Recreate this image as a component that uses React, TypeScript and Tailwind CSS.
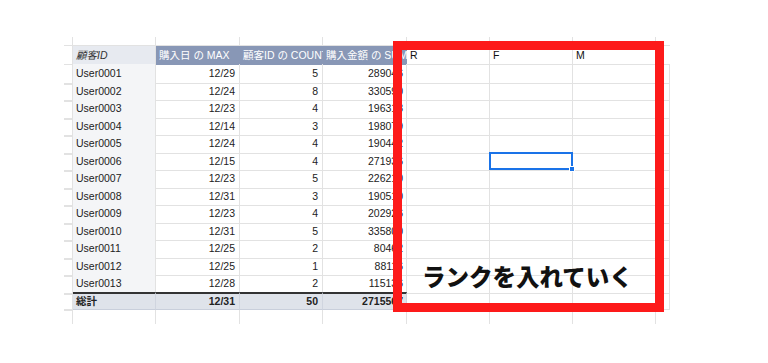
import React from "react"

type DataRow = {
    id: string
    date: string
    count: string
    amount: string
}

const rows: DataRow[] = [
    { id: "User0001", date: "12/29", count: "5", amount: "289046" },
    { id: "User0002", date: "12/24", count: "8", amount: "330590" },
    { id: "User0003", date: "12/23", count: "4", amount: "196318" },
    { id: "User0004", date: "12/14", count: "3", amount: "198079" },
    { id: "User0005", date: "12/24", count: "4", amount: "190442" },
    { id: "User0006", date: "12/15", count: "4", amount: "271936" },
    { id: "User0007", date: "12/23", count: "5", amount: "226210" },
    { id: "User0008", date: "12/31", count: "3", amount: "190510" },
    { id: "User0009", date: "12/23", count: "4", amount: "202926" },
    { id: "User0010", date: "12/31", count: "5", amount: "335800" },
    { id: "User0011", date: "12/25", count: "2", amount: "80462" },
    { id: "User0012", date: "12/25", count: "1", amount: "88116" },
    { id: "User0013", date: "12/28", count: "2", amount: "115136" },
]

const rowGrid = "grid grid-cols-[9px_83px_84px_83px_84px_83px_83px_83px_14px]"
const line = "border-r border-b border-[#e2e2e2]"
const total = "bg-[#dfe3ea] border-t-2 border-t-[#333] border-b border-b-[#c9cfdb] border-r border-r-[#d0d5df]"

const Blank = ({ last }: { last?: boolean }) => (
    <div className={last ? "border-b border-[#e2e2e2]" : line} />
)

const EmptyCells = () => (
    <>
        <Blank />
        <Blank />
        <Blank />
        <Blank />
        <Blank last />
    </>
)

const App = () => {
    return (
        <div
            className="relative w-[768px] h-[363px] bg-white overflow-hidden text-[#222]"
            style={{ fontFamily: '"Liberation Sans", "Noto Sans CJK JP", sans-serif' }}
        >
            <div className="flex flex-col pl-[64px] pt-[37px]">
                {/* partial row above */}
                <div className={`${rowGrid} h-[9px]`}>
                    <Blank />
                    <Blank />
                    <Blank />
                    <Blank />
                    <EmptyCells />
                </div>

                {/* header */}
                <div className={`${rowGrid} h-[18px] text-[10.5px] leading-[18px]`}>
                    <Blank />
                    <div className="bg-[#e7eaf0] border-r border-b border-r-[#e2e2e2] border-b-[#aab4c8] px-[3px] italic text-[#333] truncate">顧客ID</div>
                    <div className="bg-[#8897b6] border-b border-[#8897b6] px-[3px] text-white whitespace-nowrap overflow-hidden">購入日 の MAX</div>
                    <div className="bg-[#8897b6] border-b border-[#8897b6] px-[3px] text-white whitespace-nowrap overflow-hidden">顧客ID の COUNT</div>
                    <div className="bg-[#8897b6] border-b border-[#8897b6] px-[3px] text-white whitespace-nowrap overflow-hidden">購入金額 の SUM</div>
                    <div className={`${line} px-[3px] text-[#111]`}>R</div>
                    <div className={`${line} px-[3px] text-[#111]`}>F</div>
                    <div className={`${line} px-[3px] text-[#111]`}>M</div>
                    <Blank last />
                </div>

                {rows.map((r) => (
                    <div key={r.id} className={`${rowGrid} h-[17.5px] text-[10.5px] leading-[18.5px]`}>
                        <Blank />
                        <div className={`${line} bg-[#f4f5f7] px-[3px]`}>{r.id}</div>
                        <div className={`${line} pr-[4px] text-right`}>{r.date}</div>
                        <div className={`${line} pr-[4px] text-right`}>{r.count}</div>
                        <div className={`${line} pr-[3px] text-right`}>{r.amount}</div>
                        <EmptyCells />
                    </div>
                ))}

                {/* total */}
                <div className={`${rowGrid} h-[18px] text-[10.5px] leading-[15px] font-bold`}>
                    <Blank />
                    <div className={`${total} px-[3px]`}>総計</div>
                    <div className={`${total} pr-[4px] text-right`}>12/31</div>
                    <div className={`${total} pr-[4px] text-right`}>50</div>
                    <div className={`${total} pr-[3px] text-right`}>2715567</div>
                    <EmptyCells />
                </div>

                {/* partial row below */}
                <div className={`${rowGrid} h-[14px]`}>
                    <div className="border-r border-[#e2e2e2]" />
                    <div className="border-r border-[#e2e2e2]" />
                    <div className="border-r border-[#e2e2e2]" />
                    <div className="border-r border-[#e2e2e2]" />
                    <div className="border-r border-[#e2e2e2]" />
                    <div className="border-r border-[#e2e2e2]" />
                    <div className="border-r border-[#e2e2e2]" />
                    <div className="border-r border-[#e2e2e2]" />
                    <div />
                </div>
            </div>

            {/* selected cell */}
            <div className="absolute left-[489px] top-[152px] w-[84px] h-[18px] border-2 border-[#1a73e8]" />
            <div className="absolute left-[569px] top-[166px] w-[6px] h-[6px] bg-[#1a73e8] border border-white" />

            {/* red highlight */}
            <div className="absolute left-[393px] top-[41px] w-[271px] h-[271px] border-[9px] border-[#fd1a1a]" />

            <div
                className="absolute left-[422px] top-[265px] text-[23.5px] leading-none font-black text-[#111] whitespace-nowrap"
                style={{ fontFamily: '"Noto Sans CJK JP", sans-serif' }}
            >
                ランクを入れていく
            </div>
        </div>
    )
}

export default App
